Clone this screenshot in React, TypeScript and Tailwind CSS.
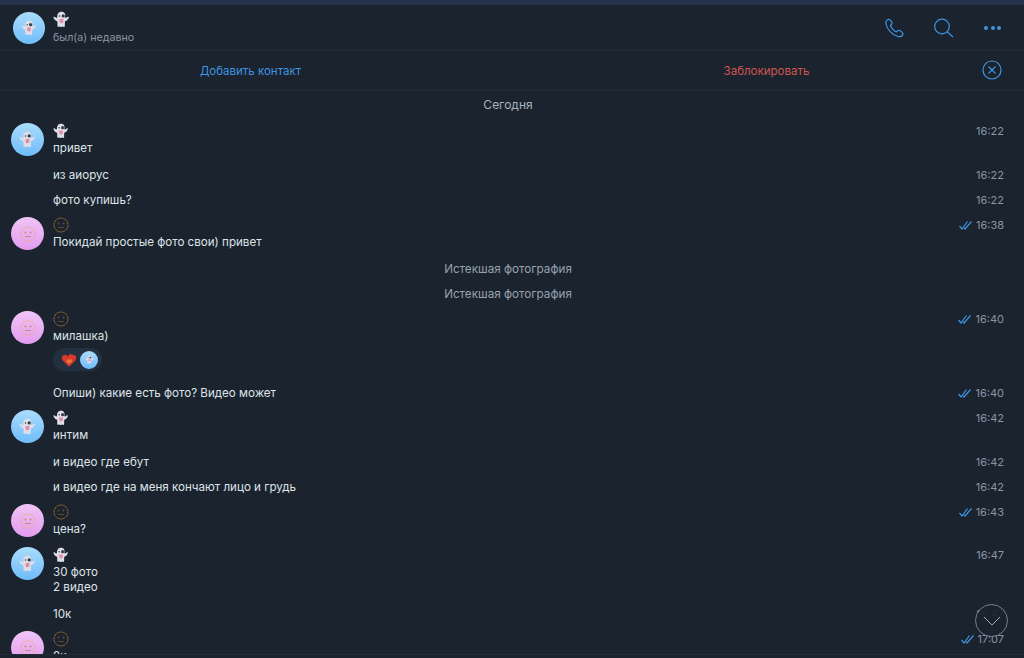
function Ghost({ size = 16 }: { size?: number }) {
  return (
    <svg width={size} height={size} viewBox="0 0 20 20">
      <path d="M10 1C6.300 1 5 3.800 5 7c0 1-.9 1.300-1.700.7C2.300 7 1.300 6.300.7 7c-.5.600.2 1.500.7 2.300.9 1.500 2.200 2.500 3.700 2.700.1 2 .3 4 .2 5.500-.1 1 .9 1.300 1.700.9.500-.3.900-.3 1.300 0 .8.600 1.600.6 2.300.1.500-.4.900-.3 1.400 0 .8.500 2 .3 1.900-.9-.1-1.600.1-3.500.2-5.600 1.500-.2 2.900-1.200 3.700-2.700.5-.8 1.200-1.700.7-2.300-.6-.7-1.600 0-2.600.7-.8.600-1.700.3-1.700-.7C15 3.800 13.700 1 10 1z" fill="#dedee6" />
      <circle cx="12" cy="5.800" r="1.900" fill="#3a3a44" />
      <circle cx="7.700" cy="6" r="0.900" fill="#3a3a44" />
      <path d="M7.800 9.500h4.400v2.800a2.200 2.200 0 0 1-4.400 0z" fill="#e58aa8" />
    </svg>
  );
}

function Face({ size = 16, light = false }: { size?: number; light?: boolean }) {
  const c = light ? '#f0ab8c' : '#94692c';
  const d = light ? '#c98a70' : '#5a4a34';
  return (
    <svg width={size} height={size} viewBox="0 0 16 16" fill="none">
      <circle cx="8" cy="8" r="7" stroke={c} strokeWidth="1" strokeDasharray="2.600 .5" />
      <circle cx="5.500" cy="6.500" r="1" fill={d} />
      <circle cx="10.500" cy="6.500" r="1" fill={d} />
      <path d="M5 10.500h6" stroke={d} strokeWidth="1" />
    </svg>
  );
}

function GhostAvatar({ size = 33 }: { size?: number }) {
  return (
    <div
      className="shrink-0 rounded-full bg-gradient-to-b from-[#a9dcfb] to-[#6fbcfb] flex items-center justify-center"
      style={{ width: size, height: size }}
    >
      <Ghost size={Math.round(size * 0.5)} />
    </div>
  );
}

function FaceAvatar() {
  return (
    <div className="size-[33px] shrink-0 rounded-full bg-gradient-to-b from-[#f0c4f6] to-[#e29cee] flex items-center justify-center">
      <Face light />
    </div>
  );
}

function Checks() {
  return (
    <svg width="14" height="9" viewBox="0 0 14 9" fill="none" stroke="#3f94e0" strokeWidth="1.200">
      <path d="M.5 5l2.500 3L8.500.5" />
      <path d="M5 6.800L6 8 12.500.5" />
    </svg>
  );
}

function Time({ value, read }: { value: string; read?: boolean }) {
  return (
    <div className="flex items-center justify-end gap-[3px] text-[11px] leading-[15px] text-[#8b95a3]">
      {read && <Checks />}
      <span>{value}</span>
    </div>
  );
}

// message with avatar and sender line
function Group({ who, lines, time, read, className = '', children }: {
  who: 'ghost' | 'face';
  lines: string[];
  time: string;
  read?: boolean;
  className?: string;
  children?: React.ReactNode;
}) {
  return (
    <div className={`flex pl-[11px] pr-5 ${className}`}>
      {who === 'ghost' ? <GhostAvatar /> : <FaceAvatar />}
      <div className="ml-[9px] flex-1 min-w-0">
        <div className="h-[18px] pb-[3px] flex items-center">
          {who === 'ghost' ? <Ghost /> : <Face />}
        </div>
        {lines.map((l) => (
          <div key={l} className="text-[11.600px] leading-[15px] text-[#dfe3e8]">{l}</div>
        ))}
        {children}
      </div>
      <div className="pt-[1px]">
        <Time value={time} read={read} />
      </div>
    </div>
  );
}

function Single({ text, time, read, className = '' }: { text: string; time: string; read?: boolean; className?: string }) {
  return (
    <div className={`h-[25px] pt-[2px] flex items-center justify-between pl-[53px] pr-5 ${className}`}>
      <span className="text-[11.600px] leading-[15px] text-[#dfe3e8]">{text}</span>
      <Time value={time} read={read} />
    </div>
  );
}

function Service({ text, className = '' }: { text: string; className?: string }) {
  return (
    <div className={`h-[25px] pt-[2px] flex items-center justify-center pr-2 text-[11.700px] text-[#98a2ae] ${className}`}>
      {text}
    </div>
  );
}

export default function App() {
  return (
    <div className="relative h-[658px] w-[1024px] overflow-hidden bg-[#1a232e] font-['Inter','Liberation_Sans',sans-serif]">
      {/* top strip */}
      <div className="h-[5px] bg-[#25344a]" />

      {/* Header */}
      <div className="h-[46px] flex items-center border-b border-[#202c38] pl-[13px] pr-[23px]">
        <GhostAvatar size={32} />
        <div className="ml-[8px] flex-1">
          <div className="h-[17px] flex items-center"><Ghost size={17} /></div>
          <div className="mt-[2px] text-[10.700px] leading-[15px] text-[#8b95a3]">был(а) недавно</div>
        </div>
        <div className="flex items-center gap-[30px] text-[#3f94e0]">
          <svg width="20" height="20" viewBox="0 0 20 20" fill="none" stroke="currentColor" strokeWidth="1.200">
            <path d="M4 1.500C2.500 2 1.500 3.500 2 6c1 5 6 11 12 12.500 2.500.5 4.500-.5 5-2.500 0-1-1-2-2.500-3-1.500-1-2.500-1-3 0l-1 1c-2.500-1-5.500-4.500-6-6.500l1-1c1-1 .5-2 0-3-1-1.500-2-2.500-3.500-2z" />
          </svg>
          <svg width="20" height="20" viewBox="0 0 20 20" fill="none" stroke="currentColor" strokeWidth="1.200">
            <circle cx="8" cy="8.500" r="7.300" />
            <path d="M13.300 13.700l5.700 5.300" />
          </svg>
          <div className="flex gap-[2.500px]">
            <span className="size-[4px] rounded-full bg-[#3f94e0]" />
            <span className="size-[4px] rounded-full bg-[#3f94e0]" />
            <span className="size-[4px] rounded-full bg-[#3f94e0]" />
          </div>
        </div>
      </div>

      {/* Contact bar */}
      <div className="h-[40px] pt-[3px] flex items-center border-b border-[#202c38] text-[11.500px]">
        <div className="w-[501px] shrink-0 text-center text-[#3f94e0]">Добавить контакт</div>
        <div className="w-[531px] shrink-0 text-center text-[#cf5550]">Заблокировать</div>
      </div>
      <svg width="20" height="20" viewBox="0 0 20 20" fill="none" stroke="#3f94e0" strokeWidth="1.200" className="absolute left-[982px] top-[60px]">
        <circle cx="10" cy="10" r="9" />
        <path d="M6.500 6.500l7 7M13.500 6.500l-7 7" />
      </svg>

      {/* Messages */}
      <div className="pt-[6px]">
        <div className="h-[16px] flex items-center justify-center pr-2 text-[12px] text-[#a9b2bc]">Сегодня</div>
        <Group who="ghost" lines={['привет']} time="16:22" className="mt-[10px]" />
        <Single text="из аиорус" time="16:22" className="mt-[6px]" />
        <Single text="фото купишь?" time="16:22" />
        <Group who="face" lines={['Покидай простые фото свои) привет']} time="16:38" read className="mt-[5px]" />
        <Service text="Истекшая фотография" className="mt-[6px]" />
        <Service text="Истекшая фотография" />
        <Group who="face" lines={['милашка)']} time="16:40" read className="mt-[5px]">
          <div className="mt-[4px] h-[23px] w-[49px] rounded-full bg-[#22303f] flex items-center pl-[8px] gap-[3px]">
            <svg width="16" height="16" viewBox="0 0 14 14">
              <path d="M7 13L1.500 7.500C0 5.500 1 2.500 3.500 2.500c1 0 2 .5 2.500 1.500C6.500 3 7.500 2 8.500 1c0 1 .5 1.500 2 1.500C13 2.500 14 5.500 12.500 7.500z" fill="#d8392b" />
              <path d="M7 10.500L4.500 8 6 6l1 1.500L8.500 6 10 8z" fill="#e8793a" />
            </svg>
            <GhostAvatar size={18} />
          </div>
        </Group>
        <Single text="Опиши) какие есть фото? Видео может" time="16:40" read className="mt-[9px]" />
        <Group who="ghost" lines={['интим']} time="16:42" className="mt-[5px]" />
        <Single text="и видео где ебут" time="16:42" className="mt-[6px]" />
        <Single text="и видео где на меня кончают лицо и грудь" time="16:42" />
        <Group who="face" lines={['цена?']} time="16:43" read className="mt-[5px]" />
        <Group who="ghost" lines={['30 фото', '2 видео']} time="16:47" className="mt-[10px]" />
        <Single text="10к" time="16:47" className="mt-[6px]" />
        <Group who="face" lines={['8к']} time="17:07" read className="mt-[5px]" />
      </div>

      {/* bottom edge */}
      <div className="absolute inset-x-0 bottom-0 h-[4px] border-t border-[#202c38] bg-[#1a232e]" />

      {/* scroll down button */}
      <div className="absolute left-[975px] top-[604px] size-[33px] rounded-full border border-[#77818d] bg-[#1a232e]/95 flex items-center justify-center">
        <svg width="18" height="10" viewBox="0 0 18 10" fill="none" stroke="#a0a8b2" strokeWidth="1">
          <path d="M1 1l8 8 8-8" />
        </svg>
      </div>
    </div>
  );
}
